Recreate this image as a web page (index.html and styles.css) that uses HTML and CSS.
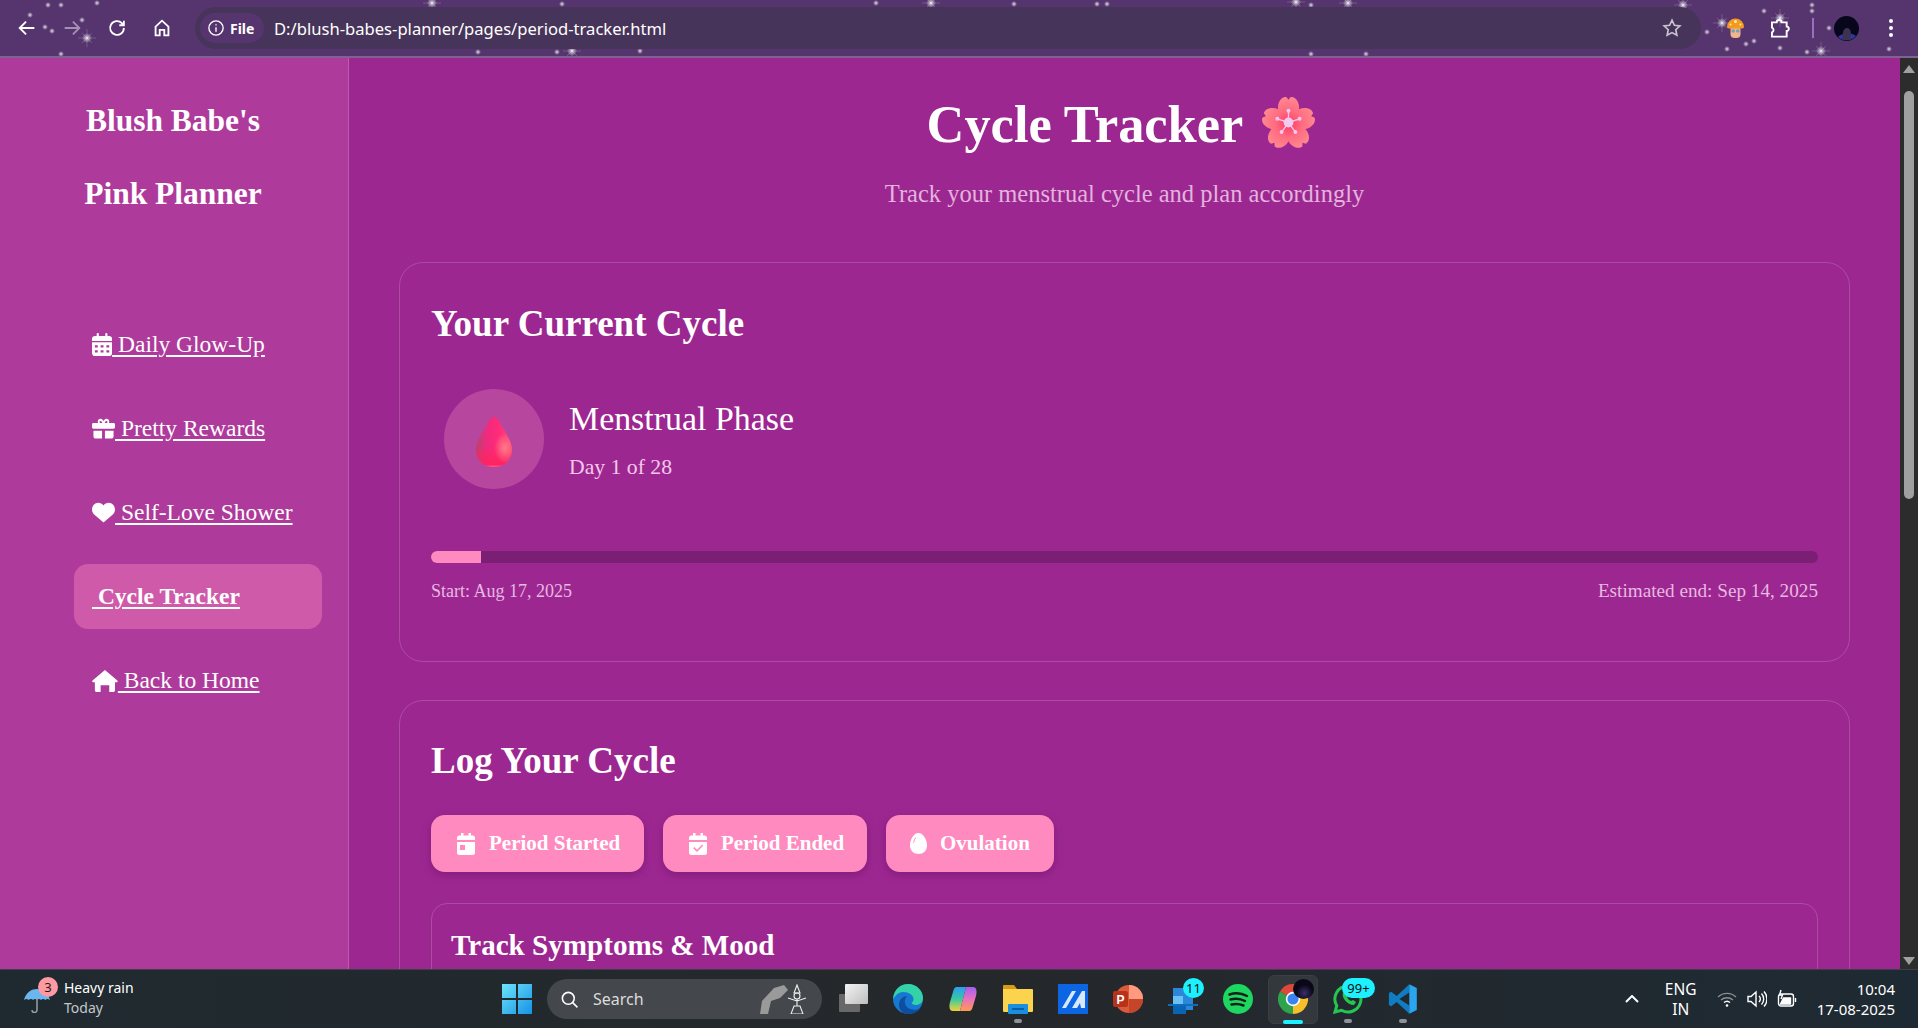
FILE: index.html
```html
<!DOCTYPE html>
<html lang="en">
<head>
<meta charset="utf-8">
<title>Cycle Tracker</title>
<link rel="stylesheet" href="styles.css">
</head>
<body>
<div class="screen">
  <header class="chrome">
    <svg class="stars" viewBox="0 0 1918 56">
      <defs>
        <radialGradient id="glow"><stop offset="0" stop-color="#fff" stop-opacity=".95"/><stop offset=".3" stop-color="#fff" stop-opacity=".55"/><stop offset="1" stop-color="#fff" stop-opacity="0"/></radialGradient>
        <g id="dot"><circle r="3" fill="url(#glow)"/></g>
        <g id="spark"><circle r="5" fill="url(#glow)"/><path d="M-9 0H9M0-9V9M-5-5L5 5M-5 5L5-5" stroke="#fff" stroke-opacity=".22" stroke-width=".8"/></g>
      </defs>
      <use href="#dot" x="48" y="5"/><use href="#dot" x="61" y="5"/><use href="#dot" x="97" y="3"/><use href="#dot" x="30" y="15"/>
      <use href="#dot" x="45" y="27"/><use href="#dot" x="52" y="31"/><use href="#dot" x="82" y="20"/><use href="#spark" x="87" y="38"/>
      <use href="#dot" x="61" y="54"/><use href="#spark" x="432" y="3"/><use href="#dot" x="562" y="4"/><use href="#dot" x="478" y="52"/>
      <use href="#dot" x="557" y="52"/><use href="#spark" x="572" y="51"/><use href="#dot" x="640" y="51"/><use href="#dot" x="876" y="3"/>
      <use href="#spark" x="931" y="3"/><use href="#dot" x="1014" y="4"/><use href="#dot" x="1097" y="4"/><use href="#dot" x="1107" y="4"/>
      <use href="#spark" x="1296" y="2"/><use href="#dot" x="1311" y="5"/><use href="#spark" x="1348" y="3"/><use href="#dot" x="1311" y="54"/>
      <use href="#dot" x="1366" y="54"/><use href="#spark" x="1683" y="5"/><use href="#spark" x="1722" y="23"/><use href="#dot" x="1764" y="11"/>
      <use href="#spark" x="1780" y="18"/><use href="#dot" x="1812" y="5"/><use href="#dot" x="1812" y="11"/><use href="#dot" x="1707" y="32"/>
      <use href="#dot" x="1746" y="44"/><use href="#dot" x="1754" y="41"/><use href="#dot" x="1727" y="49"/><use href="#dot" x="1780" y="48"/>
      <use href="#dot" x="1807" y="52"/><use href="#spark" x="1821" y="51"/><use href="#dot" x="1889" y="49"/><use href="#dot" x="1829" y="28"/>
    </svg>
    <div class="nav-btns">
      <svg class="cicon" viewBox="0 0 24 24"><path d="M20 12H5M11 5l-7 7 7 7"/></svg>
      <svg class="cicon dim" viewBox="0 0 24 24"><path d="M4 12h15M13 5l7 7-7 7"/></svg>
      <svg class="cicon" viewBox="0 0 24 24"><path d="M19.500 12a7.500 7.500 0 1 1-2.200-5.300L19.500 9M19.500 4v5h-5"/></svg>
      <svg class="cicon" viewBox="0 0 24 24"><path d="M5 10.500L12 4l7 6.500V20h-4.500v-6h-5v6H5z"/></svg>
    </div>
    <div class="omnibox">
      <div class="chip">
        <svg class="chip-icon" viewBox="0 0 24 24"><circle cx="12" cy="12" r="9.500"/><path d="M12 11v6M12 7v1.500"/></svg>
        <span>File</span>
      </div>
      <span class="url">D:/blush-babes-planner/pages/period-tracker.html</span>
      <svg class="star" viewBox="0 0 24 24"><path d="M12 3.500l2.600 5.600 6 .7-4.500 4.100 1.200 6L12 17l-5.300 2.900 1.200-6-4.500-4.100 6-.7z"/></svg>
    </div>
    <div class="chrome-tools">
      <svg class="ext" viewBox="0 0 17 20">
        <rect x="3.500" y="8" width="10" height="12" rx="4" fill="#f2b48a"/>
        <path d="M0 9a8.500 8.500 0 0 1 17 0c0 2-3 1.500-8.500 1.500S0 11 0 9z" fill="#f49a1e"/>
        <circle cx="8.500" cy="3.500" r="1.500" fill="#ffe9a8"/>
        <circle cx="3.500" cy="6.500" r="1" fill="#ffe9a8"/>
        <circle cx="13.500" cy="6.500" r="1" fill="#ffe9a8"/>
        <circle cx="6.200" cy="13" r="1.800" fill="#6ea3c0"/>
        <circle cx="10.800" cy="13" r="1.800" fill="#6ea3c0"/>
      </svg>
      <svg class="puzzle" viewBox="0 0 22 20"><path d="M2 3.500h5a2.500 2.500 0 0 1 5 0h5.500V8a2.200 2.200 0 0 1 0 4.500V18.500H2V14a2.700 2.700 0 0 0 0-5z"/></svg>
      <span class="divider"></span>
      <svg class="avatar" viewBox="0 0 25 25">
        <circle cx="12.500" cy="12.500" r="12.500" fill="#07061a"/>
        <path d="M4 21c3-4 14-5 18-1a12.500 12.500 0 0 1-18 1z" fill="#2a3a9a"/>
        <path d="M9 24c-1-6 0-12 4-12s5 6 3 12z" fill="#3d3350"/>
      </svg>
      <div class="kebab"><i></i><i></i><i></i></div>
    </div>
  </header>

  <div class="viewport">
    <aside class="sidebar">
      <h2 class="brand">Blush Babe's<br>Pink Planner</h2>
      <nav class="menu">
        <a class="menu-item" href="#"><svg class="micon" viewBox="0 0 448 512"><path d="M128 0c13 0 24 11 24 24v40h144V24a24 24 0 0 1 48 0v40h40c35 0 64 29 64 64v48H0v-48c0-35 29-64 64-64h40V24c0-13 11-24 24-24zM0 208h448v240c0 35-29 64-64 64H64c-35 0-64-29-64-64zm64 64v48h64v-48zm128 0v48h64v-48zm128 0v48h64v-48zM64 384v48h64v-48zm128 0v48h64v-48zm128 0v48h64v-48z" fill-rule="evenodd"/></svg> Daily Glow-Up</a>
        <a class="menu-item" href="#"><svg class="micon" viewBox="0 0 512 512"><path d="M190 40c20 0 38 10 50 27l16 23 16-23c12-17 30-27 50-27 35 0 62 28 62 62 0 11-3 21-8 30h104c18 0 32 14 32 32v64c0 18-14 32-32 32H32c-18 0-32-14-32-32v-64c0-18 14-32 32-32h104c-5-9-8-19-8-30 0-34 27-62 62-62zm0 48a16 16 0 0 0 0 44h42l-25-35c-4-6-10-9-17-9zm132 0c-7 0-13 3-17 9l-25 35h42a16 16 0 0 0 0-44zM32 304h192v176H80c-26 0-48-22-48-48zm256 0h192v128c0 26-22 48-48 48H288z" fill-rule="evenodd"/></svg> Pretty Rewards</a>
        <a class="menu-item" href="#"><svg class="micon" viewBox="0 0 512 512"><path d="M48 300C18 272 0 232 0 190 0 110 62 40 140 40c45 0 88 20 116 58 28-38 71-58 116-58 78 0 140 70 140 150 0 42-18 82-48 110L256 480z"/></svg> Self-Love Shower</a>
        <a class="menu-item active" href="#"> Cycle Tracker</a>
        <a class="menu-item" href="#"><svg class="micon" viewBox="0 0 576 512"><path d="M288 20l276 238c14 14 4 38-16 38h-36v176c0 22-18 40-40 40h-88V360h-192v152H104c-22 0-40-18-40-40V296H28c-20 0-30-24-16-38z"/></svg> Back to Home</a>
      </nav>
    </aside>

    <main class="content">
      <header class="page-head">
        <h1 class="page-title">Cycle Tracker <svg class="blossom" viewBox="0 0 100 100">
          <defs>
            <radialGradient id="pet" gradientUnits="userSpaceOnUse" cx="50" cy="50" r="50">
              <stop offset="0" stop-color="#ff3a62"/><stop offset=".45" stop-color="#ff6a80"/><stop offset="1" stop-color="#ff8a90"/>
            </radialGradient>
            <path id="petal" d="M50 52C34 40 26 26 32 12 35 4 42 1 46 2l4 5 4-5c4-1 11 2 14 10 6 14-2 28-18 40z"/>
          </defs>
          <g fill="url(#pet)">
            <use href="#petal"/>
            <use href="#petal" transform="rotate(72 50 52)"/>
            <use href="#petal" transform="rotate(144 50 52)"/>
            <use href="#petal" transform="rotate(216 50 52)"/>
            <use href="#petal" transform="rotate(288 50 52)"/>
          </g>
          <g stroke="#f2c9f0" stroke-width="2.500" fill="#f2c9f0">
            <path d="M50 50V28M50 50L71 43M50 50L63 68M50 50L37 68M50 50L29 43"/>
            <circle cx="50" cy="50" r="8"/>
            <circle cx="50" cy="28" r="2.500"/><circle cx="71" cy="43" r="2.500"/><circle cx="63" cy="68" r="2.500"/><circle cx="37" cy="68" r="2.500"/><circle cx="29" cy="43" r="2.500"/>
          </g>
        </svg></h1>
        <p class="subtitle">Track your menstrual cycle and plan accordingly</p>
      </header>

      <section class="card current">
        <h2 class="card-title">Your Current Cycle</h2>
        <div class="phase">
          <div class="phase-circle">
            <svg class="drop" viewBox="0 0 36 50">
              <defs>
                <linearGradient id="dropg" x1="0" y1="0" x2="1" y2="0">
                  <stop offset="0" stop-color="#b5436f"/><stop offset=".3" stop-color="#f02a80"/><stop offset=".6" stop-color="#ff2a78"/><stop offset="1" stop-color="#ff4a78"/>
                </linearGradient>
                <linearGradient id="dropb" x1="0" y1="0" x2="0" y2="1">
                  <stop offset=".55" stop-color="#ff2460" stop-opacity="0"/><stop offset=".95" stop-color="#ff2460"/><stop offset="1" stop-color="#ff5a98"/>
                </linearGradient>
                <radialGradient id="droph" cx=".8" cy=".62" r=".3">
                  <stop offset="0" stop-color="#ff7a88"/><stop offset="1" stop-color="#ff7a88" stop-opacity="0"/>
                </radialGradient>
              </defs>
              <path d="M18 0c3 0 4 2 6 6 4 8 12 17 12 27 0 10-8 17-18 17S0 43 0 33C0 23 8 14 12 6c2-4 3-6 6-6z" fill="url(#dropg)"/>
              <path d="M18 0c3 0 4 2 6 6 4 8 12 17 12 27 0 10-8 17-18 17S0 43 0 33C0 23 8 14 12 6c2-4 3-6 6-6z" fill="url(#dropb)"/>
              <path d="M18 0c3 0 4 2 6 6 4 8 12 17 12 27 0 10-8 17-18 17S0 43 0 33C0 23 8 14 12 6c2-4 3-6 6-6z" fill="url(#droph)"/>
            </svg>
          </div>
          <div class="phase-text">
            <h3 class="phase-name">Menstrual Phase</h3>
            <p class="phase-day">Day 1 of 28</p>
          </div>
        </div>
        <div class="progress"><div class="progress-fill" style="width:3.57%"></div></div>
        <div class="progress-labels"><span class="label-start">Start: Aug 17, 2025</span><span class="label-end">Estimated end: Sep 14, 2025</span></div>
      </section>

      <section class="card log">
        <h2 class="card-title">Log Your Cycle</h2>
        <div class="actions">
          <button class="action"><svg class="aicon" viewBox="3 1 18 22"><path d="M7 1h2.500v2.500h5V1H17v2.500h1.500A2.500 2.500 0 0 1 21 6v2H3V6a2.500 2.500 0 0 1 2.500-2.500H7zM3 10h18v10.500a2.500 2.500 0 0 1-2.500 2.500h-13A2.500 2.500 0 0 1 3 20.500zm3 3v5h5v-5z" fill-rule="evenodd"/></svg>Period Started</button>
          <button class="action"><svg class="aicon" viewBox="3 1 18 22"><path d="M7 1h2.500v2.500h5V1H17v2.500h1.500A2.500 2.500 0 0 1 21 6v2H3V6a2.500 2.500 0 0 1 2.500-2.500H7zM3 10h18v10.500a2.500 2.500 0 0 1-2.500 2.500h-13A2.500 2.500 0 0 1 3 20.500zm13.200 2.500L11 17.700l-2.700-2.600-1.100 1.100 3.800 3.800 6.300-6.400z" fill-rule="evenodd"/></svg>Period Ended</button>
          <button class="action"><svg class="aicon egg" viewBox="3 1 18 22"><path d="M12 1c5 0 9 7 9 13 0 5.500-4 9-9 9s-9-3.500-9-9C3 8 7 1 12 1zM9 5.500C7.500 7 6.500 9.500 6.500 11.500h.8C7.400 9.500 8.400 7.500 9.500 6z" fill-rule="evenodd"/></svg>Ovulation</button>
        </div>
        <div class="subcard">
          <h3 class="subcard-title">Track Symptoms &amp; Mood</h3>
        </div>
      </section>
    </main>

    <div class="scrollbar">
      <span class="arrow up"></span>
      <div class="track"><div class="thumb"></div></div>
      <span class="arrow down"></span>
    </div>
  </div>

  <footer class="taskbar">
    <div class="weather">
      <div class="weather-icon">
        <svg viewBox="0 0 26 24"><path d="M0 11C2 3 8 0 13 0s11 3 13 11c-2-1.500-3.500-1.500-4.500 0-1.500-1.500-3.500-1.500-4.500 0-1-1.500-3-1.500-4 0-1-1.500-3-1.500-4 0-1-1.500-3-1.500-4.500 0C3.500 9.500 2 9.500 0 11z" fill="#6cb6f0"/><path d="M13 9v12a2.500 2.500 0 0 1-5 0" fill="none" stroke="#9aa0a6" stroke-width="1.500"/></svg>
        <span class="weather-badge">3</span>
      </div>
      <div class="weather-text"><span class="wt-main">Heavy rain</span><span class="wt-sub">Today</span></div>
    </div>

    <div class="task-center">
      <svg class="ticon" viewBox="0 0 30 30">
        <defs><linearGradient id="wing" x1="0" y1="0" x2="1" y2="1"><stop offset="0" stop-color="#6de4fa"/><stop offset="1" stop-color="#1592e6"/></linearGradient></defs>
        <path d="M0 0h14v14H0zM16 0h14v14H16zM0 16h14v14H0zM16 16h14v14H16z" fill="url(#wing)"/>
      </svg>
      <div class="search">
        <svg class="search-icon" viewBox="0 0 24 24"><circle cx="10.500" cy="10.500" r="7.500"/><path d="M16 16l6 6"/></svg>
        <span>Search</span>
        <svg class="search-art" viewBox="0 0 56 30">
          <path d="M8 30l2-13L22 4l10-3 4 5-8 8-9 3-3 13z" fill="#9a9a9a"/>
          <path d="M45 1l3 8h-6zM45 15v7M39 30l3-8h6l3 8zM36 14l9 3 9-3" fill="none" stroke="#eee" stroke-width="1.100"/>
          <circle cx="45" cy="12" r="3" fill="none" stroke="#eee" stroke-width="1.100"/>
        </svg>
      </div>
      <svg class="ticon" viewBox="0 0 30 30">
        <defs><linearGradient id="tv" x1="0" y1="0" x2="1" y2="1"><stop offset="0" stop-color="#f4f4f4"/><stop offset="1" stop-color="#bdbdbd"/></linearGradient></defs>
        <rect x="1" y="10" width="21" height="18" rx="1" fill="#686868"/><rect x="7" y="0" width="23" height="20" rx="1" fill="url(#tv)"/>
      </svg>
      <svg class="ticon" viewBox="0 0 30 30">
        <circle cx="15" cy="15" r="15" fill="#1678d0"/>
        <path d="M0 15C1 5 8 0 15 0c9 0 15 7 15 14 0 5-4 7-7 7-2 0-4-1-4.500-2 1-1 2-2 2-4 0-4-5-7-10-7S3 11 0 15z" fill="#34d2a8"/>
        <path d="M13 30C6 28 4 20 8 15c2-2 4-3 6-3-3 3-3 8 0 11 3 3 9 4 14 1-3 4-9 7-15 6z" fill="#0d4f9e"/>
      </svg>
      <svg class="ticon" viewBox="0 0 30 30">
        <defs>
          <linearGradient id="cpl" x1="0" y1="0" x2="0" y2="1"><stop offset="0" stop-color="#2a9df4"/><stop offset=".5" stop-color="#38c9a0"/><stop offset="1" stop-color="#f5d03c"/></linearGradient>
          <linearGradient id="cpr" x1="0" y1="0" x2="0" y2="1"><stop offset="0" stop-color="#a060f0"/><stop offset=".5" stop-color="#e870c0"/><stop offset="1" stop-color="#ff9a50"/></linearGradient>
        </defs>
        <path d="M9 3h9l-6 24H5C1 27 1 22 2 18L5 8C6 4 7 3 9 3z" fill="url(#cpl)"/>
        <path d="M21 27h-9l6-24h7c4 0 4 5 3 9l-3 10c-1 4-2 5-4 5z" fill="url(#cpr)"/>
      </svg>
      <div class="tslot"><svg class="ticon" viewBox="0 0 30 30"><path d="M0 2a1 1 0 0 1 1-1h10l3 4H0z" fill="#d89b16"/><path d="M0 5h29a1 1 0 0 1 1 1v21a1 1 0 0 1-1 1H1a1 1 0 0 1-1-1z" fill="#fcd34d"/><rect x="5" y="20" width="20" height="10" rx="1" fill="#1a8fe0"/><rect x="9" y="24" width="12" height="2" fill="#0a5ea8"/></svg><i class="pip"></i></div>
      <svg class="ticon" viewBox="0 0 30 30"><rect width="30" height="30" fill="#0c66e4"/><path d="M4 24L14 7h4L8 24zM14 24L24 7h3v17h-4l-1-5-3 5z" fill="#d8e8ff"/></svg>
      <svg class="ticon" viewBox="0 0 30 30"><circle cx="16" cy="15" r="14" fill="#dc5a38"/><path d="M16 1a14 14 0 0 1 14 14H16z" fill="#ff9a80"/><path d="M16 15h14a14 14 0 0 1-14 14z" fill="#c4452a"/><rect x="0" y="7" width="15" height="16" rx="2" fill="#b8321a"/><text x="7.500" y="20" class="ppt">P</text></svg>
      <div class="tslot"><svg class="ticon" viewBox="0 0 30 30"><rect x="5" y="4" width="20" height="22" fill="#2b88d8"/><rect x="5" y="12" width="10" height="8" fill="#68c0f5"/><path d="M0 20h30v2H0z" fill="#0f6cbd"/><rect x="5" y="22" width="13" height="8" fill="#0a64b4"/></svg><span class="tbadge">11</span></div>
      <svg class="ticon" viewBox="0 0 30 30"><circle cx="15" cy="15" r="15" fill="#1ed760"/><path d="M6.500 10.500c6-2 12-1.500 17.500 1.500M7.500 15.500c5-1.500 10-1 14.500 1.500M8.500 20.500c4-1 8-.8 12 1" fill="none" stroke="#15201a" stroke-width="2.500" stroke-linecap="round"/></svg>
      <div class="tslot active-app">
        <svg class="ticon" viewBox="0 0 30 30">
          <path d="M15 15L2 7.500A15 15 0 0 1 28 7.500z" fill="#e0473c"/>
          <path d="M15 15L28 7.500A15 15 0 0 1 15 30z" fill="#f5c02c"/>
          <path d="M15 15L15 30A15 15 0 0 1 2 7.500z" fill="#2fa24c"/>
          <circle cx="15" cy="15" r="7.200" fill="#fff"/><circle cx="15" cy="15" r="5.600" fill="#3a83f0"/>
        </svg>
        <span class="app-avatar"></span>
        <i class="bar"></i>
      </div>
      <div class="tslot"><svg class="ticon" viewBox="0 0 30 30"><path d="M15 2a13 13 0 1 1-6.500 24.300L2 28l1.800-6.300A13 13 0 0 1 15 2z" fill="none" stroke="#25c552" stroke-width="3"/><path d="M10 9c-2 4 4 12 11 12l2-3-3-2-2 1c-2-1-3-2-4-4l1-2-2-3z" fill="#25c552"/></svg><span class="tbadge wide">99+</span><i class="pip"></i></div>
      <div class="tslot"><svg class="ticon" viewBox="0 0 100 100"><path d="M71 99L29 60 11 74l-8-4V30l8-4 18 14L71 1v27L38 50l33 22z" fill="#0f7cc4"/><path d="M71 1l25 12v74L71 99z" fill="#2ba6ee"/></svg><i class="pip"></i></div>
    </div>

    <div class="tray">
      <svg class="chevron" viewBox="0 0 14 8"><path d="M1 7l6-6 6 6"/></svg>
      <div class="lang"><span>ENG</span><span>IN</span></div>
      <svg class="tray-icon" viewBox="0 0 20 20"><path d="M1 8a13 13 0 0 1 18 0M4 11a9 9 0 0 1 12 0" stroke="#8b8f93"/><path d="M7 13.500a4.500 4.500 0 0 1 6 0"/><circle cx="10" cy="16.500" r="1.300" fill="#fff" stroke="none"/></svg>
      <svg class="tray-icon" viewBox="0 0 20 20"><path d="M1 7.500v5h3l5 4.500V3L4 7.500zM12 7a4 4 0 0 1 0 6M14.500 4.500a8 8 0 0 1 0 11M17 2.500a11 11 0 0 1 0 15"/></svg>
      <svg class="tray-icon" viewBox="0 0 20 20"><rect x="1.500" y="5" width="15" height="12" rx="2.500"/><path d="M18.500 9v4"/><path d="M3.500 15l3-6h7v6z" fill="#fff"/><path d="M4 1L2.500 6l3 0L4 10" /></svg>
      <div class="clock"><span>10:04</span><span>17-08-2025</span></div>
    </div>
  </footer>
</div>
</body>
</html>
```

FILE: styles.css
```css
* { box-sizing: border-box; }
html, body { margin: 0; height: 100%; overflow: hidden; }
body { font-family: "Liberation Serif", serif; color: #fff; background: #202a30; }
h1, h2, h3, p { margin: 0; }

.screen { width: 1918px; height: 1028px; display: flex; flex-direction: column; }

/* Browser toolbar */
.chrome { position: relative; height: 58px; flex: none; display: flex; align-items: flex-start; padding-top: 7px; border-bottom: 2px solid #7e6392; background: #56356f; }
.stars { position: absolute; left: 0; top: 0; width: 1918px; height: 56px; }
.nav-btns { position: relative; width: 195px; height: 42px; flex: none; display: flex; align-items: center; gap: 23px; padding-left: 16px; }
.cicon { width: 22px; height: 22px; flex: none; fill: none; stroke: #fff; stroke-width: 2; }
.cicon.dim { stroke: #a58fb5; }
.omnibox { position: relative; width: 1506px; height: 42px; flex: none; display: flex; align-items: center; border-radius: 21px; background: #47345a; padding: 0 18px 0 5px; }
.chip { height: 30px; width: 64px; flex: none; display: flex; align-items: center; gap: 5px; padding-left: 7px; border-radius: 15px; background: #56356f; font: bold 14px "Noto Sans", sans-serif; }
.chip-icon { width: 18px; height: 18px; fill: none; stroke: #fff; stroke-width: 1.800; }
.url { margin-left: 10px; flex: 1; font: 16.600px "Noto Sans", sans-serif; color: #fff; }
.star { width: 22px; height: 22px; fill: none; stroke: #c9c4cf; stroke-width: 1.800; }
.chrome-tools { position: relative; flex: 1; height: 42px; display: flex; align-items: center; }
.ext { width: 17px; height: 20px; flex: none; margin-left: 26px; }
.puzzle { width: 21px; height: 19px; flex: none; margin-left: 26px; fill: none; stroke: #fff; stroke-width: 2; }
.divider { width: 2px; height: 20px; background: #9a6fc0; flex: none; margin-left: 21px; }
.avatar { width: 25px; height: 25px; flex: none; margin-left: 20px; }
.kebab { display: flex; flex-direction: column; gap: 3px; margin-left: 30px; }
.kebab i { width: 4px; height: 4px; border-radius: 50%; background: #fff; }

/* Page */
.viewport { flex: 1; min-height: 0; display: flex; background: #9d2791; overflow: hidden; }
.sidebar { width: 349px; flex: none; background: #ae3a9b; border-right: 1px solid #bd5aab; padding: 26px 26px 0 74px; }
.brand { margin-left: -74px; width: 346px; text-align: center; font-size: 31.500px; line-height: 73px; font-weight: 700; height: 146px; }
.menu { display: flex; flex-direction: column; gap: 19px; margin-top: 82px; }
.menu-item { height: 65px; display: flex; align-items: center; padding-left: 18px; border-radius: 14px; color: #fff; text-decoration: underline; text-underline-offset: 3px; font-size: 23.500px; white-space: pre; }
.menu-item.active { background: #cf5aa9; font-weight: 700; }
.micon { height: 23px; width: auto; fill: #fff; flex: none; }

.content { flex: 1; min-width: 0; display: flex; flex-direction: column; padding: 0 50px; }
.page-head { text-align: center; height: 204px; padding-top: 32px; flex: none; }
.page-title { font-size: 52.400px; line-height: 68px; font-weight: 700; padding-right: 7px; }
.blossom { width: 53px; height: 53px; vertical-align: -7px; margin-left: 7px; }
.subtitle { margin-top: 19px; font-size: 24.500px; line-height: 34px; color: #e3b4dd; }
.card { flex: none; border: 1px solid #ad4ba2; border-radius: 24px; padding: 33px 31px; }
.current { height: 400px; }
.log { margin-top: 38px; height: 400px; padding-top: 32px; }
.card-title { font-size: 37px; line-height: 56px; font-weight: 700; }
.phase { display: flex; align-items: center; gap: 25px; margin-top: 37px; padding-left: 13px; }
.phase-circle { width: 100px; height: 100px; flex: none; border-radius: 50%; background: #b7469f; display: flex; align-items: center; justify-content: center; padding-top: 5px; }
.drop { width: 36px; height: 50px; }
.phase-name { font-size: 33.900px; line-height: 42px; font-weight: 400; }
.phase-day { margin-top: 13px; font-size: 21.700px; line-height: 28px; color: #f5c8ea; }
.progress { margin-top: 62px; height: 12px; border-radius: 6px; background: #7b1f74; overflow: hidden; }
.progress-fill { height: 100%; background: #ff8abf; }
.progress-labels { margin-top: 16px; display: flex; justify-content: space-between; align-items: baseline; line-height: 24px; color: #e7b9e0; }
.label-start { font-size: 18px; }
.label-end { font-size: 19.200px; }
.actions { display: flex; gap: 19px; margin-top: 26px; }
.action { height: 57px; border: 0; border-radius: 14px; background: #ff8abf; color: #fff; font: 700 21px "Liberation Serif", serif; white-space: nowrap; display: flex; align-items: center; gap: 13px; padding: 0 24px 0 25px; box-shadow: 0 3px 8px rgba(80, 10, 80, .35); }
.action:nth-child(1) { width: 213px; }
.action:nth-child(2) { width: 204px; }
.action:nth-child(3) { width: 168px; padding-left: 24px; }
.aicon { width: 20px; height: 22px; fill: #fff; flex: none; }
.aicon.egg { width: 17px; height: 21px; }
.subcard { margin-top: 31px; border: 1px solid #ad4ba2; border-radius: 16px; padding: 20px 19px; height: 200px; }
.subcard-title { font-size: 29.100px; line-height: 42px; font-weight: 700; }

/* Scrollbar */
.scrollbar { width: 18px; flex: none; display: flex; flex-direction: column; background: #2c2c2c; }
.arrow { height: 22px; flex: none; display: flex; align-items: center; justify-content: center; }
.arrow.down { height: 16px; }
.arrow::before { content: ""; border-left: 6.500px solid transparent; border-right: 6.500px solid transparent; }
.arrow.up::before { border-bottom: 8px solid #a0a0a0; }
.arrow.down::before { border-top: 8px solid #a0a0a0; }
.track { flex: 1; padding: 11px 4px 0; }
.thumb { height: 408px; border-radius: 5px; background: #a0a0a0; }

/* Taskbar */
.taskbar { height: 59px; flex: none; display: flex; align-items: center; background: linear-gradient(90deg, #1f2a30, #25282b 50%, #1e2a33); border-top: 1px solid #3a4046; font-family: "Noto Sans", sans-serif; }
.weather { display: flex; align-items: center; gap: 5px; padding-left: 24px; width: 500px; flex: none; }
.weather-icon { position: relative; width: 28px; height: 34px; }
.weather-icon svg { position: absolute; left: 0; bottom: 3px; width: 26px; height: 24px; }
.weather-badge { position: absolute; left: 14px; top: -5px; width: 20px; height: 20px; border-radius: 50%; background: #ff9aa2; color: #1a1a1a; font-size: 13px; line-height: 20px; text-align: center; }
.weather-text { display: flex; flex-direction: column; margin-left: 7px; margin-top: -2px; }
.wt-main { font-size: 14px; line-height: 20px; color: #fff; }
.wt-sub { font-size: 14px; line-height: 20px; color: #c3c7ca; }
.task-center { display: flex; align-items: center; gap: 25px; margin-left: 2px; }
.ticon { width: 30px; height: 30px; flex: none; display: block; }
.search { width: 275px; height: 40px; margin: 0 -9px 0 -10px; flex: none; display: flex; align-items: center; gap: 14px; padding: 0 14px 0 13px; border-radius: 20px; background: #44474b; font-size: 16px; color: #dcdcdc; }
.search-icon { width: 19px; height: 19px; fill: none; stroke: #fff; stroke-width: 2; flex: none; }
.search-art { width: 56px; height: 30px; margin-left: auto; }
.tslot { position: relative; display: flex; align-items: center; justify-content: center; }
.pip { position: absolute; left: 11px; bottom: -9px; width: 8px; height: 4px; border-radius: 2px; background: #8d9399; }
.tbadge { position: absolute; top: -6px; left: 15px; width: 21px; height: 20px; border-radius: 50%; background: #1df0ff; color: #111; font-size: 13px; line-height: 20px; text-align: center; }
.tbadge.wide { width: 33px; border-radius: 10px; left: 9px; }
.active-app { width: 50px; height: 49px; margin: 0 -10px; border-radius: 6px; background: #33383c; border: 1px solid #3a3f44; }
.app-avatar { position: absolute; left: 24px; top: 3px; width: 21px; height: 20px; border-radius: 50%; background: radial-gradient(circle at 55% 70%, #3b2f6b 0, #0a0818 45%); }
.bar { position: absolute; left: 14px; bottom: -1px; width: 20px; height: 4px; border-radius: 2px; background: #1df0ff; }
.tray { margin-left: auto; display: flex; align-items: center; padding-right: 23px; color: #fff; }
.chevron { width: 14px; height: 8px; fill: none; stroke: #fff; stroke-width: 2; margin-right: 27px; }
.lang { width: 30px; display: flex; flex-direction: column; align-items: center; font-size: 15.500px; line-height: 20px; margin-right: 21px; }
.tray-icon { width: 20px; height: 20px; fill: none; stroke: #fff; stroke-width: 1.400; margin-right: 10px; }
.tray-icon:last-of-type { margin-right: 0; }
.clock { display: flex; flex-direction: column; align-items: flex-end; margin-left: 20px; font-size: 15px; line-height: 20px; }
.ppt { font: bold 12px "Liberation Sans", sans-serif; fill: #fff; text-anchor: middle; }
```
